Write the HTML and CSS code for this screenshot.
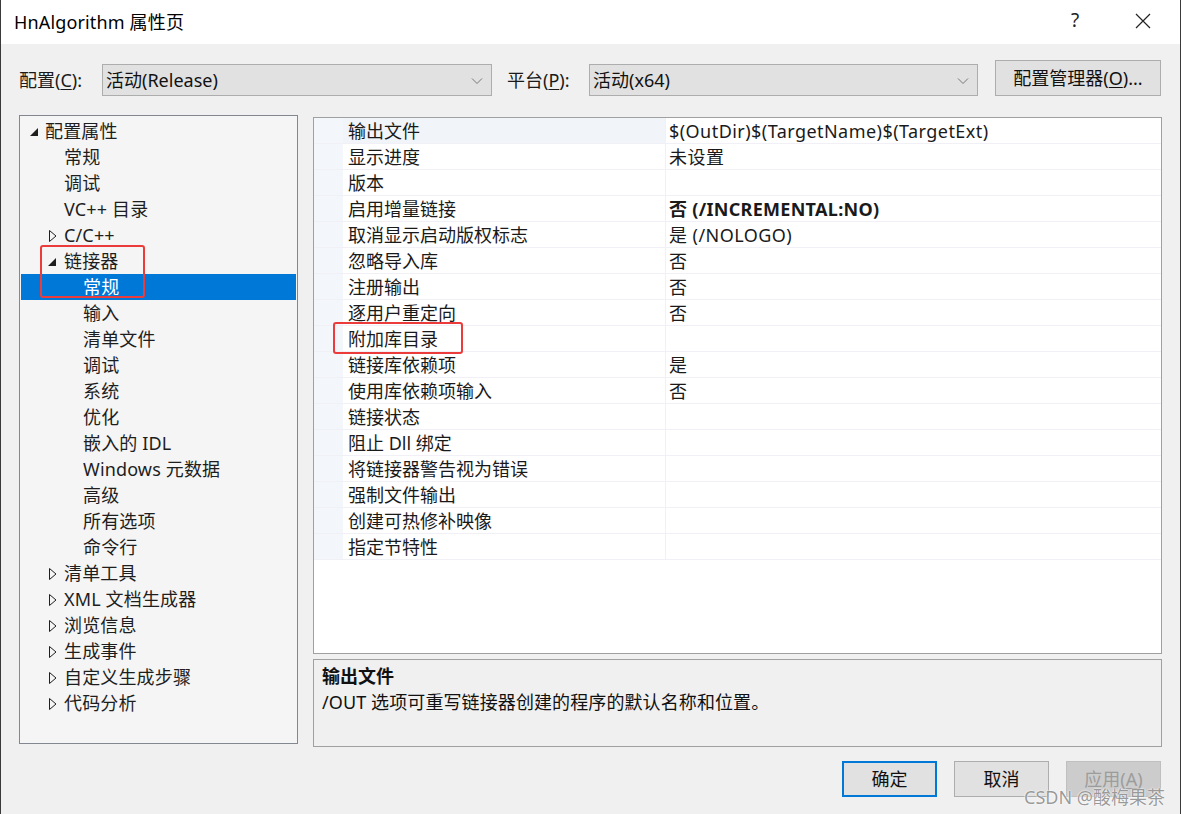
FILE: index.html
```html
<!DOCTYPE html>
<html lang="zh-CN">
<head>
<meta charset="utf-8">
<title>HnAlgorithm 属性页</title>
<link rel="stylesheet" href="styles.css">
</head>
<body>
<div class="window">
  <div class="titlebar">
    <div class="title">HnAlgorithm 属性页</div>
    <div class="tb-btn help">?</div>
    <div class="tb-btn close">
      <svg width="16" height="16" viewBox="0 0 16 16"><path d="M1 1 L15 15 M15 1 L1 15" stroke="#222" stroke-width="1.2" fill="none"/></svg>
    </div>
  </div>

  <div class="config-row">
    <label class="cfg-label">配置(<u>C</u>):</label>
    <div class="combo combo-1"><span>活动(Release)</span>
      <svg class="chev" width="12" height="8" viewBox="0 0 12 8"><path d="M1 1.5 L6 6.5 L11 1.5" stroke="#777" stroke-width="1" fill="none"/></svg>
    </div>
    <label class="cfg-label plat-label">平台(<u>P</u>):</label>
    <div class="combo combo-2"><span>活动(x64)</span>
      <svg class="chev" width="12" height="8" viewBox="0 0 12 8"><path d="M1 1.5 L6 6.5 L11 1.5" stroke="#777" stroke-width="1" fill="none"/></svg>
    </div>
    <button class="btn cfg-mgr">配置管理器(<u>O</u>)...</button>
  </div>

  <div class="main">
    <div class="tree">
      <div class="row l0"><span class="twisty"><svg width="10" height="8" viewBox="0 0 10 8"><polygon points="9,0 9,8 1,8" fill="#1e1e1e"/></svg></span>配置属性</div>
      <div class="row l1"><span class="twisty"></span>常规</div>
      <div class="row l1"><span class="twisty"></span>调试</div>
      <div class="row l1"><span class="twisty"></span>VC++ 目录</div>
      <div class="row l1"><span class="twisty tw-c"><svg width="8" height="12" viewBox="0 0 8 12"><polygon points="0.5,0.5 7,6 0.5,11.5" fill="none" stroke="#1e1e1e" stroke-width="1"/></svg></span>C/C++</div>
      <div class="row l1"><span class="twisty tw-e"><svg width="10" height="8" viewBox="0 0 10 8"><polygon points="9,0 9,8 1,8" fill="#1e1e1e"/></svg></span>链接器</div>
      <div class="row l2 selected"><span class="twisty"></span>常规</div>
      <div class="row l2"><span class="twisty"></span>输入</div>
      <div class="row l2"><span class="twisty"></span>清单文件</div>
      <div class="row l2"><span class="twisty"></span>调试</div>
      <div class="row l2"><span class="twisty"></span>系统</div>
      <div class="row l2"><span class="twisty"></span>优化</div>
      <div class="row l2"><span class="twisty"></span>嵌入的 IDL</div>
      <div class="row l2"><span class="twisty"></span>Windows 元数据</div>
      <div class="row l2"><span class="twisty"></span>高级</div>
      <div class="row l2"><span class="twisty"></span>所有选项</div>
      <div class="row l2"><span class="twisty"></span>命令行</div>
      <div class="row l1"><span class="twisty tw-c"><svg width="8" height="12" viewBox="0 0 8 12"><polygon points="0.5,0.5 7,6 0.5,11.5" fill="none" stroke="#1e1e1e" stroke-width="1"/></svg></span>清单工具</div>
      <div class="row l1"><span class="twisty tw-c"><svg width="8" height="12" viewBox="0 0 8 12"><polygon points="0.5,0.5 7,6 0.5,11.5" fill="none" stroke="#1e1e1e" stroke-width="1"/></svg></span>XML 文档生成器</div>
      <div class="row l1"><span class="twisty tw-c"><svg width="8" height="12" viewBox="0 0 8 12"><polygon points="0.5,0.5 7,6 0.5,11.5" fill="none" stroke="#1e1e1e" stroke-width="1"/></svg></span>浏览信息</div>
      <div class="row l1"><span class="twisty tw-c"><svg width="8" height="12" viewBox="0 0 8 12"><polygon points="0.5,0.5 7,6 0.5,11.5" fill="none" stroke="#1e1e1e" stroke-width="1"/></svg></span>生成事件</div>
      <div class="row l1"><span class="twisty tw-c"><svg width="8" height="12" viewBox="0 0 8 12"><polygon points="0.5,0.5 7,6 0.5,11.5" fill="none" stroke="#1e1e1e" stroke-width="1"/></svg></span>自定义生成步骤</div>
      <div class="row l1"><span class="twisty tw-c"><svg width="8" height="12" viewBox="0 0 8 12"><polygon points="0.5,0.5 7,6 0.5,11.5" fill="none" stroke="#1e1e1e" stroke-width="1"/></svg></span>代码分析</div>
      <div class="mark mark-tree"></div>
    </div>

    <div class="right">
      <div class="grid">
        <div class="prow first"><div class="gut"></div><div class="pname">输出文件</div><div class="pval">$(OutDir)$(TargetName)$(TargetExt)</div></div>
        <div class="prow"><div class="gut"></div><div class="pname">显示进度</div><div class="pval">未设置</div></div>
        <div class="prow"><div class="gut"></div><div class="pname">版本</div><div class="pval"></div></div>
        <div class="prow"><div class="gut"></div><div class="pname">启用增量链接</div><div class="pval bold">否 (/INCREMENTAL:NO)</div></div>
        <div class="prow"><div class="gut"></div><div class="pname">取消显示启动版权标志</div><div class="pval">是 (/NOLOGO)</div></div>
        <div class="prow"><div class="gut"></div><div class="pname">忽略导入库</div><div class="pval">否</div></div>
        <div class="prow"><div class="gut"></div><div class="pname">注册输出</div><div class="pval">否</div></div>
        <div class="prow"><div class="gut"></div><div class="pname">逐用户重定向</div><div class="pval">否</div></div>
        <div class="prow"><div class="gut"></div><div class="pname">附加库目录</div><div class="pval"></div></div>
        <div class="prow"><div class="gut"></div><div class="pname">链接库依赖项</div><div class="pval">是</div></div>
        <div class="prow"><div class="gut"></div><div class="pname">使用库依赖项输入</div><div class="pval">否</div></div>
        <div class="prow"><div class="gut"></div><div class="pname">链接状态</div><div class="pval"></div></div>
        <div class="prow"><div class="gut"></div><div class="pname">阻止 Dll 绑定</div><div class="pval"></div></div>
        <div class="prow"><div class="gut"></div><div class="pname">将链接器警告视为错误</div><div class="pval"></div></div>
        <div class="prow"><div class="gut"></div><div class="pname">强制文件输出</div><div class="pval"></div></div>
        <div class="prow"><div class="gut"></div><div class="pname">创建可热修补映像</div><div class="pval"></div></div>
        <div class="prow"><div class="gut"></div><div class="pname">指定节特性</div><div class="pval"></div></div>
        <div class="mark mark-grid"></div>
      </div>
      <div class="desc">
        <div class="desc-title">输出文件</div>
        <div class="desc-text">/OUT 选项可重写链接器创建的程序的默认名称和位置。</div>
      </div>
    </div>
  </div>

  <div class="buttons">
    <button class="btn dlg default">确定</button>
    <button class="btn dlg">取消</button>
    <button class="btn dlg disabled">应用(<u>A</u>)</button>
    <div class="watermark">CSDN @酸梅果茶</div>
  </div>
</div>
</body>
</html>
```

FILE: styles.css
```css
* { box-sizing: border-box; }
html, body {
  margin: 0;
  padding: 0;
  width: 1181px;
  height: 814px;
  overflow: hidden;
  background: #f0f0f0;
  font-family: "Noto Sans", "Noto Sans CJK SC", sans-serif;
  font-size: 18px;
  color: #1a1a1a;
}
u { text-decoration: underline; text-underline-offset: 2px; text-decoration-thickness: 1px; }

.window {
  position: relative;
  width: 1181px;
  height: 814px;
  border-left: 1px solid #3a3a3a;
  border-right: 1px solid #3a3a3a;
  background: #f0f0f0;
}

.titlebar {
  height: 44px;
  background: #ffffff;
  display: flex;
  align-items: center;
  padding-left: 13px;
}
.title {
  flex: 1;
  font-size: 18px;
  color: #000;
  padding-bottom: 2px;
  letter-spacing: 0.15px;
}
.tb-btn {
  display: flex;
  align-items: center;
  justify-content: center;
  height: 44px;
}
.help {
  width: 30px;
  font-size: 19px;
  color: #222;
  margin-right: 38px;
  padding-bottom: 4px;
}
.close {
  width: 30px;
  margin-right: 22px;
  padding-bottom: 2px;
}

.config-row {
  display: flex;
  align-items: flex-start;
  margin-top: 16px;
  padding-left: 18px;
  height: 36px;
}
.cfg-label {
  width: 83px;
  height: 32px;
  margin-top: 4px;
  line-height: 32px;
  color: #1a1a1a;
}
.plat-label {
  width: 82px;
  margin-left: 15px;
}
.combo {
  position: relative;
  height: 32px;
  margin-top: 4px;
  background: #e1e1e1;
  border: 1px solid #adadad;
  line-height: 30px;
  padding-left: 3px;
  color: #111;
}
.combo-1 { width: 390px; }
.combo-2 { width: 389px; }
.chev {
  position: absolute;
  right: 8px;
  top: 12px;
}
.btn {
  font-family: inherit;
  font-size: 18px;
  color: #111;
  background: #e1e1e1;
  border: 1px solid #adadad;
  padding: 0;
  margin: 0;
  line-height: 1;
}
.cfg-mgr {
  width: 166px;
  height: 36px;
  margin-left: 17px;
}

.main {
  display: flex;
  align-items: flex-start;
  margin-top: 19px;
  padding-left: 18px;
}
.tree {
  position: relative;
  width: 279px;
  height: 629px;
  background: #f5f5f5;
  border: 1px solid #828790;
  padding: 2px 1px;
}
.row {
  height: 26px;
  line-height: 26px;
  display: flex;
  align-items: center;
  white-space: nowrap;
  color: #1e1e1e;
  letter-spacing: 0.15px;
}
.twisty {
  width: 20px;
  height: 26px;
  flex: none;
  display: flex;
  align-items: center;
}
.l0 { padding-left: 4px; }
.l0 .twisty svg { margin-left: 4px; margin-top: 1px; }
.l1 { padding-left: 23px; }
.tw-c svg { margin-left: 5px; margin-top: 1px; }
.tw-e svg { margin-left: 3px; margin-top: 1px; }
.l2 { padding-left: 42px; }
.selected {
  background: #0078d7;
  color: #ffffff;
}

.mark {
  position: absolute;
  border: 2px solid #ec3b3b;
  border-radius: 3px;
  pointer-events: none;
}
.mark-tree {
  left: 20px;
  top: 129px;
  width: 105px;
  height: 53px;
}

.right {
  margin-left: 15px;
  width: 849px;
  display: flex;
  flex-direction: column;
  gap: 5px;
}
.grid {
  position: relative;
  margin-top: 2px;
  height: 537px;
  background: #ffffff;
  border: 1px solid #a0a0a0;
}
.prow {
  display: flex;
  height: 26px;
  line-height: 24px;
  padding-top: 1px;
  border-bottom: 1px solid #f0f0f6;
}
.gut {
  width: 29px;
  flex: none;
  background: #f3f6fb;
  margin-top: -1px;
}
.pname {
  width: 323px;
  flex: none;
  padding-left: 5px;
  border-right: 1px solid #f0f0f6;
  white-space: nowrap;
  color: #1a1a1a;
  margin-top: -1px;
  padding-top: 1px;
}
.first .pname { background: #f1f4f9; }
.pval {
  flex: 1;
  padding-left: 3px;
  white-space: nowrap;
  color: #1a1a1a;
  letter-spacing: 0.45px;
}
.bold { font-weight: 700; letter-spacing: 0.3px; }
.mark-grid {
  left: 19px;
  top: 204px;
  width: 130px;
  height: 32px;
}

.desc {
  height: 88px;
  background: #f0f0f0;
  border: 1px solid #a0a0a0;
  padding: 3px 8px;
}
.desc-title {
  font-weight: 700;
  line-height: 26px;
  color: #111;
}
.desc-text {
  line-height: 26px;
  color: #111;
  letter-spacing: 0.1px;
}

.buttons {
  position: relative;
  display: flex;
  justify-content: flex-end;
  gap: 17px;
  margin-top: 14px;
  padding-right: 19px;
}
.dlg {
  width: 95px;
  height: 36px;
}
.default {
  border: 2px solid #0078d7;
}
.disabled {
  background: #cccccc;
  border-color: #bfbfbf;
  color: #9c9c9c;
}
.watermark {
  position: absolute;
  right: 15px;
  top: 22px;
  font-size: 18px;
  color: rgba(120, 120, 120, 0.75);
  text-shadow: 0 0 2px #ffffff, 0 0 1px #ffffff;
  white-space: nowrap;
  pointer-events: none;
}
```
